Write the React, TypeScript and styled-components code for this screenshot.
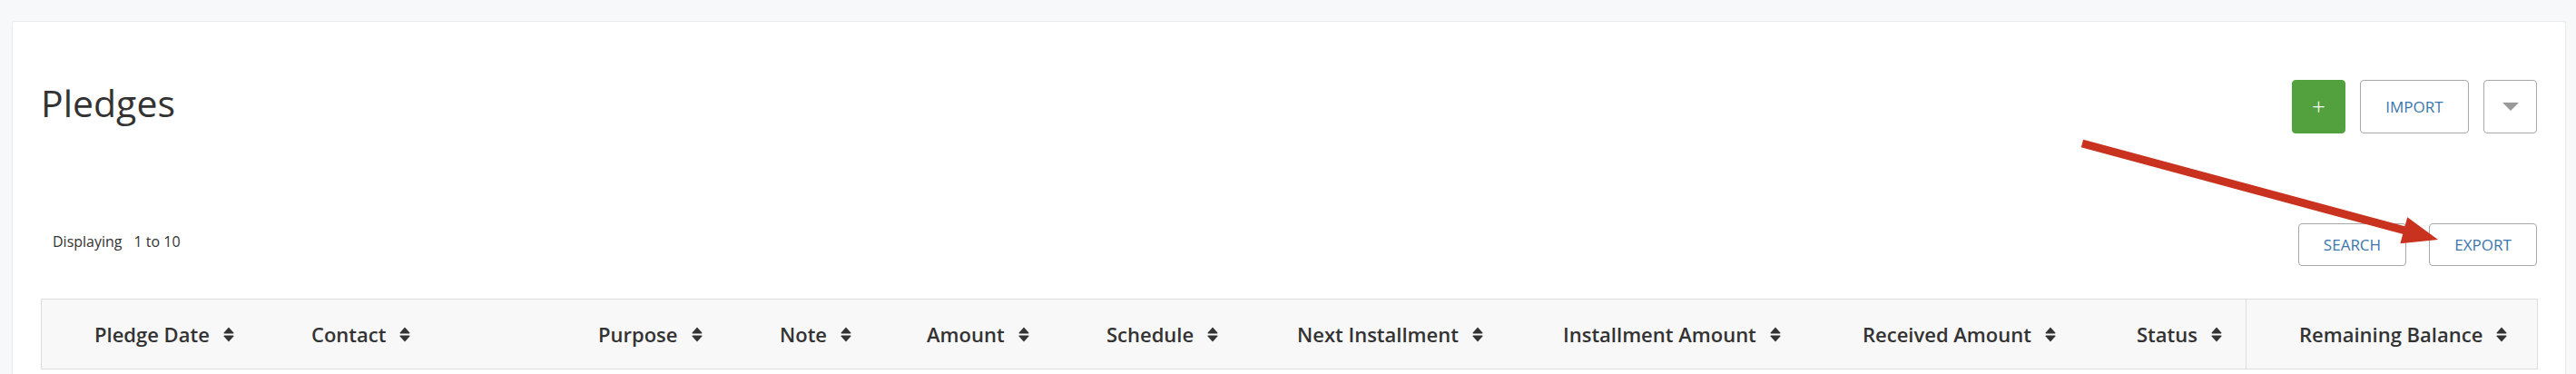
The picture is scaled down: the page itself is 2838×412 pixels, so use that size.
import React from "react";
import styled, { createGlobalStyle } from "styled-components";

const GlobalStyle = createGlobalStyle`
  html, body {
    margin: 0;
    padding: 0;
    background: #f7f8fa;
    font-family: "Open Sans", "Liberation Sans", Arial, sans-serif;
    color: #333333;
  }
  * { box-sizing: border-box; }
`;

const Page = styled.div`
  position: relative;
  width: 2838px;
  height: 412px;
  overflow: hidden;
  padding: 23px 11px 0 13px;
`;

const Card = styled.section`
  background: #ffffff;
  border: 1px solid #e8eaed;
  border-bottom: none;
  border-radius: 3px 3px 0 0;
  padding: 64px 31px 40px 31px;
  min-height: 420px;
`;

const TitleRow = styled.div`
  display: flex;
  align-items: flex-start;
  justify-content: space-between;
`;

const Title = styled.h1`
  margin: 0;
  font-size: 41px;
  line-height: 50px;
  font-weight: 400;
  color: #333333;
`;

const Actions = styled.div`
  display: flex;
  gap: 16px;
`;

const Button = styled.button<{ $w: number; $h: number; $variant?: "primary" | "outline" }>`
  width: ${(p) => p.$w}px;
  height: ${(p) => p.$h}px;
  display: inline-flex;
  align-items: center;
  justify-content: center;
  padding: 0;
  border-radius: 4px;
  font-family: "Open Sans", "Liberation Sans", Arial, sans-serif;
  font-size: 17px;
  font-weight: 400;
  letter-spacing: 0;
  cursor: pointer;
  background: ${(p) => (p.$variant === "primary" ? "#52a13e" : "#ffffff")};
  color: ${(p) => (p.$variant === "primary" ? "#ffffff" : "#3b76ab")};
  border: 1px solid ${(p) => (p.$variant === "primary" ? "#52a13e" : "#a8a8a8")};
`;

const Plus = styled.span`
  font-size: 26px;
  font-weight: 300;
  line-height: 1;
  margin-top: -2px;
`;

const Caret = styled.span`
  width: 0;
  height: 0;
  border-left: 9px solid transparent;
  border-right: 9px solid transparent;
  border-top: 9px solid #9a9a9a;
`;

const ToolRow = styled.div`
  display: flex;
  align-items: center;
  justify-content: space-between;
  margin-top: 99px;
`;

const Displaying = styled.div`
  display: flex;
  gap: 13px;
  font-size: 16px;
  line-height: 22px;
  color: #333333;
  padding-left: 13px;
  margin-top: -7px;
`;

const ToolButtons = styled.div`
  display: flex;
  gap: 25px;
`;

const Table = styled.table`
  margin-top: 36px;
  width: 2750px;
  border-collapse: collapse;
  table-layout: fixed;
  background: #f8f8f8;
`;

const HeadCell = styled.th<{ $divider?: boolean }>`
  height: 77px;
  padding: 0 0 0 58px;
  text-align: left;
  font-size: 22px;
  font-weight: 600;
  color: #333333;
  white-space: nowrap;
  border-top: 1px solid #dedede;
  border-bottom: 1px solid #dedede;
  border-left: 1px solid ${(p) => (p.$divider ? "#dedede" : "transparent")};
  &:first-child { border-left: 1px solid #dedede; }
  &:last-child { border-right: 1px solid #dedede; }
`;

const HeadInner = styled.span`
  display: inline-flex;
  align-items: center;
  gap: 15px;
`;

const Overlay = styled.svg`
  position: absolute;
  left: 0;
  top: 0;
  pointer-events: none;
`;

const SortIcon = () => (
  <svg width="12" height="17" viewBox="0 0 12 17" aria-hidden="true">
    <path d="M6 0.6 L11.4 6.6 Q11.8 7.4 10.9 7.4 L1.1 7.4 Q0.2 7.4 0.6 6.6 Z" fill="#333333" />
    <path d="M6 16.4 L11.4 10.4 Q11.8 9.6 10.9 9.6 L1.1 9.6 Q0.2 9.6 0.6 10.4 Z" fill="#333333" />
  </svg>
);

const columns: { label: string; width: number }[] = [
  { label: "Pledge Date", width: 239 },
  { label: "Contact", width: 316 },
  { label: "Purpose", width: 200 },
  { label: "Note", width: 162 },
  { label: "Amount", width: 198 },
  { label: "Schedule", width: 210 },
  { label: "Next Installment", width: 293 },
  { label: "Installment Amount", width: 330 },
  { label: "Received Amount", width: 302 },
  { label: "Status", width: 179 },
  { label: "Remaining Balance", width: 321 },
];

export default function App() {
  return (
    <>
      <GlobalStyle />
      <Page>
        <Card>
          <TitleRow>
            <Title>Pledges</Title>
            <Actions>
              <Button $w={59} $h={59} $variant="primary" aria-label="Add">
                <Plus>+</Plus>
              </Button>
              <Button $w={120} $h={59}>IMPORT</Button>
              <Button $w={59} $h={59} aria-label="More">
                <Caret />
              </Button>
            </Actions>
          </TitleRow>
          <ToolRow>
            <Displaying>
              <span>Displaying</span>
              <span>1 to 10</span>
            </Displaying>
            <ToolButtons>
              <Button $w={119} $h={47}>SEARCH</Button>
              <Button $w={119} $h={47}>EXPORT</Button>
            </ToolButtons>
          </ToolRow>
          <Table>
            <colgroup>
              {columns.map((c) => (
                <col key={c.label} style={{ width: c.width }} />
              ))}
            </colgroup>
            <thead>
              <tr>
                {columns.map((c, i) => (
                  <HeadCell key={c.label} $divider={i === columns.length - 1}>
                    <HeadInner>
                      {c.label}
                      <SortIcon />
                    </HeadInner>
                  </HeadCell>
                ))}
              </tr>
            </thead>
          </Table>
        </Card>
        <Overlay width="2838" height="412" viewBox="0 0 2838 412">
          <line x1="2294" y1="158" x2="2650" y2="254" stroke="#c9321f" strokeWidth="9" />
          <polygon points="2686,264 2644.4,268.3 2652.2,239.3" fill="#c9321f" />
        </Overlay>
      </Page>
    </>
  );
}
